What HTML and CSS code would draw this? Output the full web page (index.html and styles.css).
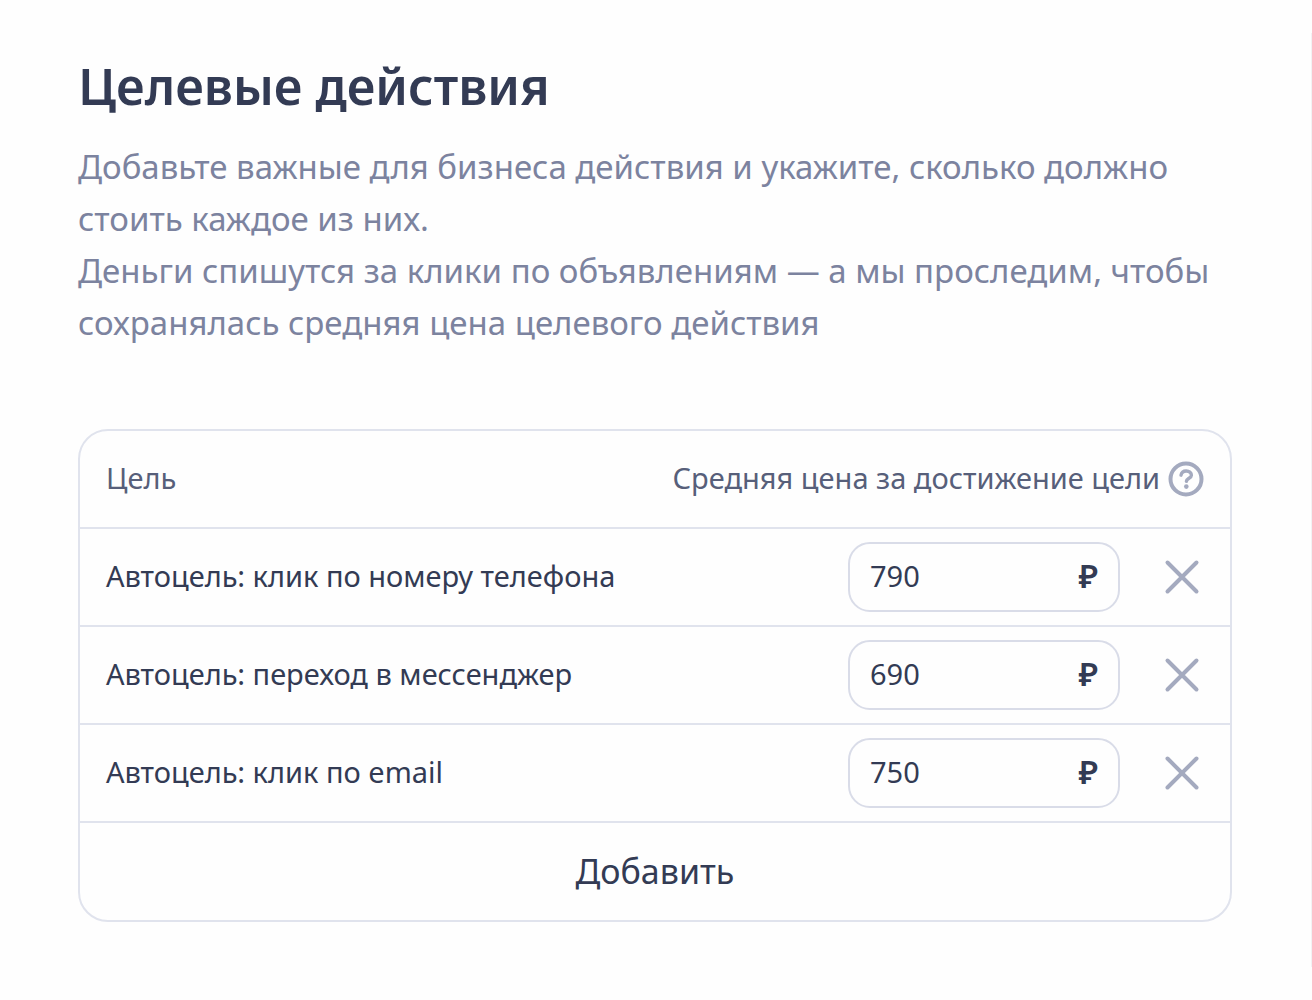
FILE: index.html
```html
<!DOCTYPE html>
<html lang="ru">
<head>
<meta charset="utf-8">
<title>Целевые действия</title>
<link rel="stylesheet" href="styles.css">
</head>
<body>
<main class="panel">
  <h1 class="title">Целевые действия</h1>
  <p class="lead">Добавьте важные для бизнеса действия и укажите, сколько должно стоить каждое из них.<br>Деньги спишутся за клики по объявлениям — а мы проследим, чтобы сохранялась средняя цена целевого действия</p>
  <div class="card">
    <table class="goals">
      <thead>
        <tr>
          <th class="goal" scope="col"><span class="text">Цель</span></th>
          <th class="price-head" scope="col" colspan="2">
            <div class="head-line"><span class="text">Средняя цена за достижение цели</span>
            <button class="help" type="button" aria-label="Справка"><svg width="36" height="36" viewBox="0 0 36 36" fill="none" stroke="currentColor" stroke-width="4"><circle cx="18" cy="18" r="15.5"/><path d="M13 14.200c.500-2.700 2.500-4.200 5.200-4.200 3 0 5.200 1.700 5.200 4.200 0 3-4.900 3.100-5 6.200" stroke-width="3.400" stroke-linecap="round"/><circle cx="18.300" cy="25.600" r="2.300" fill="currentColor" stroke="none"/></svg></button></div>
          </th>
        </tr>
      </thead>
      <tbody>
        <tr>
          <td class="goal"><label class="text" for="p1">Автоцель: клик по номеру телефона</label></td>
          <td class="price"><div class="field"><input class="text" id="p1" type="text" value="790"><span class="unit">₽</span></div></td>
          <td class="drop"><button class="remove" type="button" aria-label="Удалить"><svg width="36" height="36" viewBox="0 0 36 36" fill="none" stroke="currentColor" stroke-width="4" stroke-linecap="round"><path d="M3.500 3.500l29 29M32.500 3.500l-29 29"/></svg></button></td>
        </tr>
        <tr>
          <td class="goal"><label class="text" for="p2">Автоцель: переход в мессенджер</label></td>
          <td class="price"><div class="field"><input class="text" id="p2" type="text" value="690"><span class="unit">₽</span></div></td>
          <td class="drop"><button class="remove" type="button" aria-label="Удалить"><svg width="36" height="36" viewBox="0 0 36 36" fill="none" stroke="currentColor" stroke-width="4" stroke-linecap="round"><path d="M3.500 3.500l29 29M32.500 3.500l-29 29"/></svg></button></td>
        </tr>
        <tr>
          <td class="goal"><label class="text" for="p3">Автоцель: клик по email</label></td>
          <td class="price"><div class="field"><input class="text" id="p3" type="text" value="750"><span class="unit">₽</span></div></td>
          <td class="drop"><button class="remove" type="button" aria-label="Удалить"><svg width="36" height="36" viewBox="0 0 36 36" fill="none" stroke="currentColor" stroke-width="4" stroke-linecap="round"><path d="M3.500 3.500l29 29M32.500 3.500l-29 29"/></svg></button></td>
        </tr>
      </tbody>
    </table>
    <button class="add" type="button">Добавить</button>
  </div>
</main>
</body>
</html>
```
FILE: styles.css
```css
* { box-sizing: border-box; }
body {
  margin: 0;
  padding: 33px 0;
  background: #fefefe;
  color: #333b54;
  font-family: "Noto Sans", "Open Sans", sans-serif;
  font-size: 29px;
}
button { display: block; border: 0; padding: 0; background: none; color: inherit; font: inherit; cursor: pointer; }
svg { display: block; }
.panel { padding: 23px 79px 45px 78px; border-right: 1px solid #f2f2f4; }
.title { margin: 0; font-size: 50px; line-height: 60px; font-weight: 600; }
.lead { margin: 25px 0 80px; font-size: 33px; line-height: 52px; color: #7c839f; }
.card { border: 2px solid #e0e3ed; border-radius: 30px; overflow: hidden; }
.goals { width: 100%; border-collapse: separate; border-spacing: 0; }
.goals th, .goals td { height: 98px; padding: 0; border-bottom: 2px solid #e0e3ed; font-weight: 400; text-align: left; }
.goals .goal { padding-left: 26px; }
.goals th { color: #575f7a; }
.text { display: block; padding: 0 0 4px; }
.head-line { display: flex; justify-content: flex-end; align-items: center; gap: 8px; padding-right: 26px; }
.help, .remove { color: #a4aabf; }
.goals .drop { width: 110px; padding-left: 44px; }
.field { display: flex; align-items: center; width: 272px; height: 70px; margin-left: auto; padding: 0 20px; border: 2px solid #d9dce8; border-radius: 22px; }
.field input { flex: 1; min-width: 0; border: 0; outline: 0; background: none; color: inherit; font: inherit; }
.unit { padding-bottom: 4px; font-size: 33px; font-weight: 600; }
.add { width: 100%; height: 97px; padding-bottom: 2px; font-size: 34px; }
```
